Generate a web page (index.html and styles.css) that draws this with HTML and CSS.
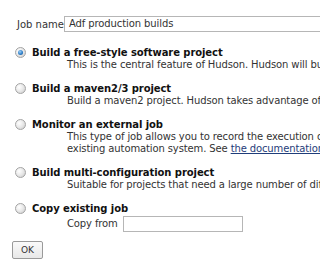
FILE: index.html
```html
<!DOCTYPE html>
<html>
<head>
<link rel="stylesheet" href="styles.css">
</head>
<body>
<div class="page">
  <div class="name-row">
    <span class="name-label">Job name</span>
    <span class="text-input wide">Adf production builds</span>
  </div>
  <div class="options">
    <div class="option">
      <div class="opt-head"><span class="radio checked"></span><span class="opt-title">Build a free-style software project</span></div>
      <div class="opt-desc">This is the central feature of Hudson. Hudson will build your project, combining any SCM with any build system</div>
    </div>
    <div class="option">
      <div class="opt-head"><span class="radio"></span><span class="opt-title">Build a maven2/3 project</span></div>
      <div class="opt-desc">Build a maven2 project. Hudson takes advantage of your POM files and drastically reduces the configuration.</div>
    </div>
    <div class="option">
      <div class="opt-head"><span class="radio"></span><span class="opt-title">Monitor an external job</span></div>
      <div class="opt-desc wrap">This type of job allows you to record the execution of a process run outside Hudson<br>existing automation system. See <a href="#">the documentation</a> for more details.</div>
    </div>
    <div class="option">
      <div class="opt-head"><span class="radio"></span><span class="opt-title">Build multi-configuration project</span></div>
      <div class="opt-desc">Suitable for projects that need a large number of different configurations, such as testing</div>
    </div>
    <div class="option">
      <div class="opt-head"><span class="radio"></span><span class="opt-title">Copy existing job</span></div>
      <div class="opt-desc copy-row"><span>Copy from</span><span class="text-input small"></span></div>
    </div>
  </div>
  <div class="ok-row"><span class="ok-btn">OK</span></div>
</div>
</body>
</html>
```
FILE: styles.css
```css
html, body {
  margin: 0;
  padding: 0;
  background: #fff;
  overflow: hidden;
}
.page {
  width: 320px;
  height: 267px;
  overflow: hidden;
  font-family: "DejaVu Sans", Verdana, sans-serif;
  font-size: 10px;
  color: #333;
  padding-top: 16px;
  box-sizing: border-box;
}
.name-row {
  display: flex;
  align-items: flex-start;
  white-space: nowrap;
  padding-left: 17px;
}
.name-label {
  line-height: 13px;
  padding-top: 2px;
  width: 49px;
  color: #333;
}
.text-input {
  display: inline-block;
  box-sizing: border-box;
  border: 1px solid #b6b6b6;
  height: 16px;
  line-height: 14px;
  padding-left: 4px;
  color: #333;
  background: #fff;
}
.wide {
  width: 400px;
  flex: none;
  letter-spacing: -0.1px;
}
.options {
  padding-top: 13px;
  padding-left: 15px;
}
.option {
  margin-bottom: 10px;
}
.opt-head {
  display: flex;
  align-items: center;
  height: 14px;
  white-space: nowrap;
}
.radio {
  width: 11px;
  height: 11px;
  box-sizing: border-box;
  border-radius: 50%;
  border: 1px solid #a4a4a4;
  background: radial-gradient(circle at 35% 35%, #ffffff 0%, #e8e8e8 50%, #c6c6c6 100%);
  margin-right: 6px;
  flex: none;
  position: relative;
}
.radio.checked::after {
  content: "";
  position: absolute;
  left: 2px;
  top: 2px;
  width: 5px;
  height: 5px;
  border-radius: 50%;
  background: radial-gradient(circle at 40% 35%, #9fd0f5 0%, #2f7fc9 55%, #0b4c8a 100%);
}
.opt-title {
  font-weight: bold;
  color: #111;
  letter-spacing: -0.08px;
}
.opt-desc {
  padding-left: 52px;
  line-height: 12px;
  white-space: nowrap;
  letter-spacing: -0.12px;
}
.opt-desc a {
  color: #1f3d7a;
  text-decoration: underline;
}
.copy-row {
  display: flex;
  align-items: center;
  gap: 5px;
  padding-top: 1px;
}
.small {
  width: 120px;
  height: 16px;
}
.ok-row {
  padding-left: 12px;
  margin-top: -1px;
}
.ok-btn {
  display: inline-block;
  box-sizing: border-box;
  width: 31px;
  height: 18px;
  border: 1px solid #9a9a9a;
  border-radius: 2px;
  background: linear-gradient(#fafafa, #e8e8e8);
  font-size: 9px;
  line-height: 16px;
  text-align: center;
  color: #333;
}
```
